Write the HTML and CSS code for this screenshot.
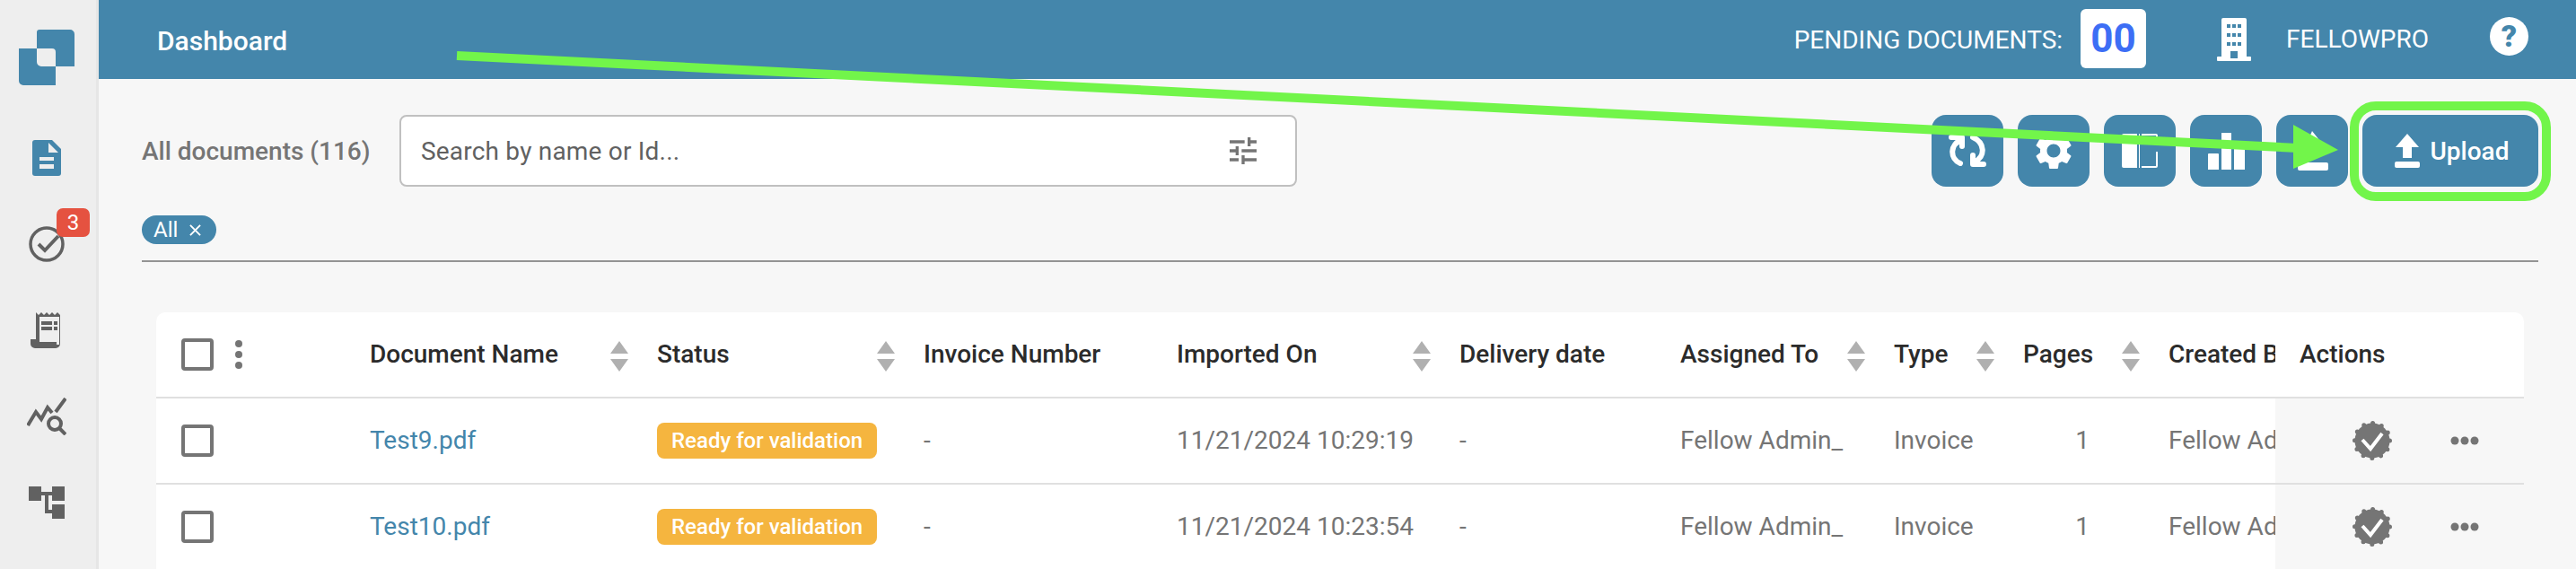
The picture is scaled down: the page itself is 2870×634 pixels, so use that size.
FILE: index.html
```html
<!DOCTYPE html>
<html lang="en">
  <head>
    <meta charset="UTF-8" />
    <title>Dashboard</title>
    <link rel="stylesheet" href="styles.css">
  </head>

  <body>
    <aside class="sidebar">
      <div class="logo">
        <svg width="62" height="62" viewBox="0 0 62 62">
          <path class="blue" d="M20 3a3 3 0 0 1 3-3H57a5 5 0 0 1 5 5V41H41V25a4 4 0 0 0-4-4H20Z"/>
          <path class="blue" d="M0 21H20V36a5 5 0 0 0 5 5H41V62H5a5 5 0 0 1-5-5Z"/>
        </svg>
      </div>
      <nav class="side-nav">
        <a class="nav-item">
          <svg width="32" height="40" viewBox="0 0 32 40">
            <path class="blue" d="M3 0H22L32 10V37a3 3 0 0 1-3 3H3a3 3 0 0 1-3-3V3a3 3 0 0 1 3-3Z"/>
            <path class="cut" d="M18 3V14H29ZM8 19H24V23H8ZM8 27H24V32H8Z"/>
          </svg>
        </a>
        <a class="nav-item">
          <svg width="40" height="40" viewBox="0 0 40 40">
            <circle cx="20" cy="20" r="18" class="line" stroke-width="3.5"/>
            <path d="M11 20L18 27L33 11" class="line" stroke-width="4"/>
          </svg>
          <span class="count">3</span>
        </a>
        <a class="nav-item">
          <svg width="36" height="40" viewBox="0 0 36 40">
            <path class="grey" d="M6 0l3 3 3-3 3 3 3-3 3 3 3-3 3 3 3-3 3 3V35a5 5 0 0 1-5 5H5a5 5 0 0 1-5-5V30H6Z"/>
            <path class="cut" d="M10 5H32V28H29V33H10ZM29 36h3v-8h-3Z"/>
            <path class="grey" d="M12 10H24V14H12ZM26 10H30V14H26ZM12 16H24V20H12ZM26 16H30V20H26Z"/>
          </svg>
        </a>
        <a class="nav-item">
          <svg width="44" height="42" viewBox="0 0 44 42">
            <path class="line" stroke-width="4" d="M1 31L10 16L16 24L23 11L28 17M32 16L43 1"/>
            <circle class="line" stroke-width="4" cx="31" cy="29" r="7"/>
            <path class="line" stroke-width="4" d="M36 34L43 41"/>
          </svg>
        </a>
        <a class="nav-item">
          <svg width="40" height="36" viewBox="0 0 40 36">
            <path class="grey" d="M0 0H14V16H0ZM26 0H40V16H26ZM26 20H40V36H26ZM14 6H26V10H22V26H26V30H18V10H14Z"/>
          </svg>
        </a>
      </nav>
    </aside>

    <div class="main">
      <header class="topbar">
        <h1 class="page-title">Dashboard</h1>
        <div class="topbar-right">
          <span class="pending-label">PENDING DOCUMENTS:</span>
          <span class="pending-count">00</span>
          <svg class="building" width="38" height="48" viewBox="0 0 38 48">
            <path class="white" d="M5 2a2 2 0 0 1 2-2H31a2 2 0 0 1 2 2V43H37a1 1 0 0 1 1 1V47a1 1 0 0 1-1 1H1a1 1 0 0 1-1-1V44a1 1 0 0 1 1-1H5Z"/>
            <path class="head-cut" d="M11 7h4v4h-4ZM17 7h4v4h-4ZM23 7h4v4h-4ZM11 17h4v4h-4ZM17 17h4v4h-4ZM23 17h4v4h-4ZM11 27h4v4h-4ZM17 27h4v4h-4ZM23 27h4v4h-4ZM15 37h8v8h-8Z"/>
          </svg>
          <span class="company">FELLOWPRO</span>
          <span class="help">?</span>
        </div>
      </header>

      <div class="content">
        <div class="toolbar">
          <span class="doc-count">All documents (116)</span>
          <div class="search">
            <span class="search-text">Search by name or Id...</span>
            <svg width="40" height="40" viewBox="0 0 24 24">
              <path class="filter-icon" d="M3 17v2h6v-2H3zM3 5v2h10V5H3zm10 16v-2h8v-2h-8v-2h-2v6h2zM7 9v2H3v2h4v2h2V9H7zm14 4v-2H11v2h10zm-6-4h2V7h4V5h-4V3h-2v6z"/>
            </svg>
          </div>
          <div class="actions">
            <button class="icon-btn">
              <svg width="42" height="36" viewBox="0 0 42 36">
                <path class="btn-line" d="M15 6C1 10 1 27 13 32M3 3H15V13M27 3C41 9 41 25 29 30M39 33H27V23"/>
              </svg>
            </button>
            <button class="icon-btn">
              <svg width="50" height="50" viewBox="0 0 24 24">
                <path class="white" d="M19.14 12.94c.04-.3.06-.61.06-.94 0-.32-.02-.64-.07-.94l2.03-1.58c.18-.14.23-.41.12-.61l-1.92-3.32c-.12-.22-.37-.29-.59-.22l-2.39.96c-.5-.38-1.03-.7-1.62-.94l-.36-2.54c-.04-.24-.24-.41-.48-.41h-3.84c-.24 0-.43.17-.47.41l-.36 2.54c-.59.24-1.13.57-1.62.94l-2.39-.96c-.22-.08-.47 0-.59.22L2.74 8.87c-.12.21-.08.47.12.61l2.03 1.58c-.05.3-.09.63-.09.94s.02.64.07.94l-2.03 1.58c-.18.14-.23.41-.12.61l1.92 3.32c.12.22.37.29.59.22l2.39-.96c.5.38 1.03.7 1.62.94l.36 2.54c.05.24.24.41.48.41h3.84c.24 0 .44-.17.47-.41l.36-2.54c.59-.24 1.13-.56 1.62-.94l2.39.96c.22.08.47 0 .59-.22l1.92-3.32c.12-.22.07-.47-.12-.61l-2.01-1.58zM12 15.6c-1.98 0-3.6-1.62-3.6-3.6s1.62-3.6 3.6-3.6 3.6 1.62 3.6 3.6-1.62 3.6-3.6 3.6z"/>
              </svg>
            </button>
            <button class="icon-btn">
              <svg width="40" height="38" viewBox="0 0 40 38">
                <path class="white" d="M2 0H17V38H2a2 2 0 0 1-2-2V2a2 2 0 0 1 2-2ZM19 0H20V38H19ZM22 0H38a2 2 0 0 1 2 2V8H38V2H22ZM38 20H40V36a2 2 0 0 1-2 2H22V36H38Z"/>
              </svg>
            </button>
            <button class="icon-btn">
              <svg width="41" height="41" viewBox="0 0 41 41">
                <path class="white" d="M1 23H11a1 1 0 0 1 1 1V41H0V24a1 1 0 0 1 1-1ZM15 0H26V41H15ZM30 13H41V41H29V14a1 1 0 0 1 1-1Z"/>
              </svg>
            </button>
            <button class="icon-btn">
              <svg width="36" height="44" viewBox="0 0 36 44">
                <path class="white" d="M18 0L34 20L24 30H10V18ZM4 35H34a2 2 0 0 1 2 2V42a2 2 0 0 1-2 2H4a2 2 0 0 1-2-2V37a2 2 0 0 1 2-2Z"/>
              </svg>
            </button>
            <button class="upload-btn">
              <svg width="28" height="38" viewBox="0 0 28 38">
                <path class="white" d="M14 0L27 15H19V27H9V15H1ZM2 31H26a2 2 0 0 1 2 2V36a2 2 0 0 1-2 2H2a2 2 0 0 1-2-2V33a2 2 0 0 1 2-2Z"/>
              </svg>
              Upload
            </button>
          </div>
        </div>

        <div class="chips">
          <span class="chip">All
            <svg width="13" height="13" viewBox="0 0 14 14"><path class="chip-x" d="M1 1L13 13M13 1L1 13"/></svg>
          </span>
        </div>

        <div class="table-card">
          <table class="doc-table">
            <colgroup>
              <col class="col-select"><col class="col-name"><col class="col-status"><col class="col-invoice">
              <col class="col-imported"><col class="col-delivery"><col class="col-assigned"><col class="col-type">
              <col class="col-pages"><col class="col-created"><col class="col-actions">
            </colgroup>
            <thead>
              <tr>
                <th>
                  <div class="select-cell">
                    <input type="checkbox" class="check">
                    <svg width="16" height="32" viewBox="0 0 16 32">
                      <circle class="kebab" cx="8" cy="4" r="4"/><circle class="kebab" cx="8" cy="16" r="4"/><circle class="kebab" cx="8" cy="28" r="4"/>
                    </svg>
                  </div>
                </th>
                <th><div class="sort-cell">Document Name <svg class="sort" viewBox="0 0 20 34"><path d="M10 0L20 14H0ZM0 20H20L10 34Z"/></svg></div></th>
                <th><div class="sort-cell">Status <svg class="sort" viewBox="0 0 20 34"><path d="M10 0L20 14H0ZM0 20H20L10 34Z"/></svg></div></th>
                <th>Invoice Number</th>
                <th><div class="sort-cell">Imported On <svg class="sort" viewBox="0 0 20 34"><path d="M10 0L20 14H0ZM0 20H20L10 34Z"/></svg></div></th>
                <th>Delivery date</th>
                <th><div class="sort-cell">Assigned To <svg class="sort" viewBox="0 0 20 34"><path d="M10 0L20 14H0ZM0 20H20L10 34Z"/></svg></div></th>
                <th><div class="sort-cell">Type <svg class="sort" viewBox="0 0 20 34"><path d="M10 0L20 14H0ZM0 20H20L10 34Z"/></svg></div></th>
                <th><div class="sort-cell">Pages <svg class="sort" viewBox="0 0 20 34"><path d="M10 0L20 14H0ZM0 20H20L10 34Z"/></svg></div></th>
                <th>Created By</th>
                <th class="actions-head">Actions</th>
              </tr>
            </thead>
            <tbody>
              <tr>
                <td><div class="select-cell"><input type="checkbox" class="check"></div></td>
                <td><a class="doc-link">Test9.pdf</a></td>
                <td><span class="status">Ready for validation</span></td>
                <td>-</td>
                <td>11/21/2024 10:29:19</td>
                <td>-</td>
                <td>Fellow Admin_</td>
                <td>Invoice</td>
                <td class="pages">1</td>
                <td>Fellow Admin_</td>
                <td class="row-actions">
                  <div class="row-actions-inner">
                    <svg width="44" height="44" viewBox="0 0 44 44">
                      <circle class="seal" cx="22" cy="22" r="19.5"/>
                      <path class="seal-check" d="M11 21L20 31L33 14"/>
                    </svg>
                    <svg width="32" height="10" viewBox="0 0 32 10">
                      <circle class="kebab" cx="5" cy="5" r="4.5"/><circle class="kebab" cx="16" cy="5" r="4.5"/><circle class="kebab" cx="27" cy="5" r="4.5"/>
                    </svg>
                  </div>
                </td>
              </tr>
              <tr>
                <td><div class="select-cell"><input type="checkbox" class="check"></div></td>
                <td><a class="doc-link">Test10.pdf</a></td>
                <td><span class="status">Ready for validation</span></td>
                <td>-</td>
                <td>11/21/2024 10:23:54</td>
                <td>-</td>
                <td>Fellow Admin_</td>
                <td>Invoice</td>
                <td class="pages">1</td>
                <td>Fellow Admin_</td>
                <td class="row-actions">
                  <div class="row-actions-inner">
                    <svg width="44" height="44" viewBox="0 0 44 44">
                      <circle class="seal" cx="22" cy="22" r="19.5"/>
                      <path class="seal-check" d="M11 21L20 31L33 14"/>
                    </svg>
                    <svg width="32" height="10" viewBox="0 0 32 10">
                      <circle class="kebab" cx="5" cy="5" r="4.5"/><circle class="kebab" cx="16" cy="5" r="4.5"/><circle class="kebab" cx="27" cy="5" r="4.5"/>
                    </svg>
                  </div>
                </td>
              </tr>
            </tbody>
          </table>
        </div>
      </div>
    </div>

    <!-- green annotation drawn on top of the screenshot -->
    <svg class="annotation" width="2870" height="634" viewBox="0 0 2870 634">
      <line x1="509" y1="62" x2="2560" y2="165" class="mark-line"/>
      <path d="M2555 139L2605 167L2555 188Z" class="mark-head"/>
      <rect x="2623" y="118" width="214" height="101" rx="24" class="mark-box"/>
    </svg>
  </body>
</html>
```

FILE: styles.css
```css
body {
  font-family: Roboto, "Liberation Sans", sans-serif;
  font-size: 28px;
  margin: 0;
  height: 634px;
  overflow: hidden;
  display: flex;
  background-color: #f7f7f7;
  color: #757575;
}

/* svg fills */
.blue { fill: #4486ab; }
.grey { fill: #616161; }
.white { fill: #fff; }
.cut { fill: #eee; }
.head-cut { fill: #4486ab; }
.line { fill: none; stroke: #616161; }
.filter-icon { fill: #757575; }
.btn-line { fill: none; stroke: #fff; stroke-width: 6; stroke-linecap: round; stroke-linejoin: round; }
.kebab { fill: #757575; }

.sidebar {
  width: 110px;
  flex-shrink: 0;
  box-sizing: border-box;
  background-color: #eee;
  border-right: 3px solid #e6e6e6;
}

.logo {
  height: 128px;
  display: flex;
  align-items: center;
  justify-content: center;
  padding-right: 3px;
}

.nav-item {
  position: relative;
  height: 96px;
  display: flex;
  align-items: center;
  justify-content: center;
  padding-right: 3px;
}

.count {
  position: absolute;
  top: 8px;
  left: 63px;
  width: 37px;
  height: 32px;
  border-radius: 7px;
  background-color: #e55240;
  color: #fff;
  font-size: 24px;
  line-height: 32px;
  text-align: center;
}

.main {
  flex: 1;
  min-width: 0;
  display: flex;
  flex-direction: column;
}

.topbar {
  height: 88px;
  flex-shrink: 0;
  background-color: #4486ab;
  color: #fff;
  display: flex;
  align-items: center;
  justify-content: space-between;
  padding: 0 53px 0 65px;
}

.page-title {
  margin: 2px 0 0;
  font-size: 30px;
  font-weight: 500;
}

.topbar-right {
  display: flex;
  align-items: center;
}

.pending-count {
  width: 73px;
  height: 66px;
  margin: 0 0 2px 20px;
  border-radius: 6px;
  background-color: #fff;
  color: #3d6ef5;
  font-size: 44px;
  font-weight: 700;
  line-height: 66px;
  text-align: center;
}

.building {
  margin-left: 79px;
}

.company {
  margin: 0 0 2px 39px;
}

.help {
  width: 43px;
  height: 43px;
  margin: 0 0 8px 68px;
  border-radius: 50%;
  background-color: #fff;
  color: #4486ab;
  font-size: 34px;
  font-weight: 900;
  line-height: 43px;
  text-align: center;
}

.content {
  flex: 1;
  min-height: 0;
  padding: 40px 42px 0 48px;
  display: flex;
  flex-direction: column;
}

.toolbar {
  height: 80px;
  flex-shrink: 0;
  display: flex;
  align-items: center;
}

.doc-count {
  width: 287px;
  font-weight: 500;
}

.search {
  width: 1000px;
  height: 80px;
  box-sizing: border-box;
  border: 2px solid #c0c0c0;
  border-radius: 8px;
  background-color: #fff;
  display: flex;
  align-items: center;
  justify-content: space-between;
  padding: 0 38px 0 22px;
  color: #616161;
  letter-spacing: 0.2px;
}

.actions {
  margin-left: auto;
  display: flex;
  gap: 16px;
}

.icon-btn,
.upload-btn {
  height: 80px;
  padding: 0;
  border: none;
  border-radius: 16px;
  background-color: #4486ab;
  color: #fff;
  display: flex;
  align-items: center;
  justify-content: center;
}

.icon-btn {
  width: 80px;
}

.upload-btn {
  width: 196px;
  padding-left: 3px;
  gap: 12px;
  font-family: inherit;
  font-size: 28px;
  font-weight: 500;
}

.chips {
  flex-shrink: 0;
  margin-top: 32px;
  padding-bottom: 18px;
  border-bottom: 2px solid #949494;
  display: flex;
}

.chip {
  height: 32px;
  padding: 0 17px 0 13px;
  border-radius: 16px;
  background-color: #4486ab;
  color: #fff;
  font-size: 24px;
  line-height: 32px;
  display: flex;
  align-items: center;
  gap: 13px;
}

.chip-x {
  fill: none;
  stroke: #fff;
  stroke-width: 2;
}

.table-card {
  flex: 1;
  min-height: 0;
  margin: 56px 16px 0;
  background-color: #fff;
  border-radius: 10px 10px 0 0;
  overflow: hidden;
}

.doc-table {
  width: 2638px;
  table-layout: fixed;
  border-collapse: separate;
  border-spacing: 0;
  white-space: nowrap;
}

.col-select { width: 238px; }
.col-name { width: 320px; }
.col-status { width: 297px; }
.col-invoice { width: 282px; }
.col-imported { width: 315px; }
.col-delivery { width: 246px; }
.col-assigned { width: 238px; }
.col-type { width: 144px; }
.col-pages { width: 162px; }
.col-created { width: 119px; }
.col-actions { width: 277px; }

.doc-table tr {
  height: 96px;
}

.doc-table th,
.doc-table td {
  padding: 0 0 2px;
  border-bottom: 2px solid #e0e0e0;
  overflow: hidden;
  text-align: left;
}

.doc-table th {
  color: #2b2b2b;
  font-weight: 500;
}

.doc-table th.actions-head {
  padding-left: 27px;
}

.select-cell {
  display: flex;
  align-items: center;
  gap: 20px;
  margin-top: 2px;
  padding-left: 28px;
}

.check {
  appearance: none;
  width: 36px;
  height: 36px;
  margin: 0;
  box-sizing: border-box;
  border: 4px solid #757575;
  border-radius: 4px;
  background-color: #fff;
}

.sort-cell {
  display: flex;
  align-items: center;
  justify-content: space-between;
  padding-right: 32px;
}

.sort {
  width: 20px;
  height: 34px;
  margin-top: 6px;
  fill: #b0b0b0;
}

.doc-link {
  color: #4486ab;
}

.status {
  display: inline-block;
  height: 40px;
  margin-top: 2px;
  padding: 0 16px;
  border-radius: 8px;
  background-color: #f5b53f;
  color: #fff;
  font-size: 24px;
  font-weight: 500;
  line-height: 40px;
  vertical-align: middle;
}

.doc-table td.pages {
  padding-right: 88px;
  text-align: right;
}

.doc-table td.row-actions {
  background-color: #f7f7f7;
}

.row-actions-inner {
  display: flex;
  align-items: center;
  gap: 65px;
  margin-top: 2px;
  padding-left: 86px;
}

.seal {
  fill: #757575;
  stroke: #757575;
  stroke-width: 5;
  stroke-linecap: round;
  stroke-dasharray: 0 10.21;
}

.seal-check {
  fill: none;
  stroke: #fff;
  stroke-width: 4;
}

.annotation {
  position: absolute;
  top: 0;
  left: 0;
  pointer-events: none;
}

.mark-line {
  stroke: #72f54a;
  stroke-width: 10;
}

.mark-head {
  fill: #72f54a;
}

.mark-box {
  fill: none;
  stroke: #72f54a;
  stroke-width: 10;
}
```
